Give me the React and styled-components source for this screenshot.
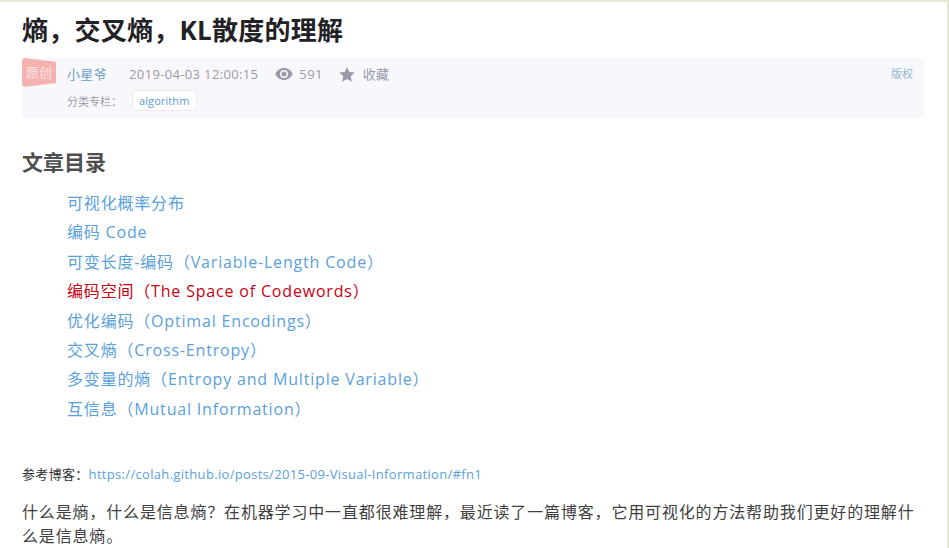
import React from "react";
import styled, { createGlobalStyle } from "styled-components";

const Global = createGlobalStyle`
  html, body { margin: 0; padding: 0; background: #e6e9cf; overflow: hidden; }
  body { font-family: "Open Sans", "Noto Sans CJK SC", sans-serif; }
`;
const Page = styled.div`
  box-sizing: border-box;
  width: 947px;
  height: 546px;
  margin-top: 2px;
  background: #fff;
  padding: 0 23px 0 22px;
  overflow: hidden;
`;
const Title = styled.h1`
  margin: 0;
  padding-top: 13px;
  height: 43px;
  box-sizing: content-box;
  font-size: 26px;
  letter-spacing: 0.25px;
  line-height: 30px;
  font-weight: 700;
  color: #222226;
`;
const Info = styled.div`
  position: relative;
  box-sizing: border-box;
  height: 60px;
  background: #f8f8fc;
  border-radius: 4px;
  padding: 7px 11px 0 45px;
  color: #858585;
  font-size: 13px;
`;
const Badge = styled.span`
  position: absolute;
  left: 0;
  top: 0;
  width: 34px;
  height: 29px;
  background: #f4b2ae;
  color: #fbe6e4;
  font-size: 13px;
  letter-spacing: 0.2px;
  line-height: 29px;
  text-align: center;
  clip-path: polygon(6% 0, 100% 13%, 100% 86%, 6% 100%, 0 92%, 0 6%);
  border-radius: 3px;
`;
const MetaRow = styled.div`
  display: flex;
  align-items: center;
  height: 18px;
  line-height: 18px;
`;
const Author = styled.span`
  font-size: 13px;
  letter-spacing: 0.35px;
  color: #6b9fc9;
  margin-right: 22px;
`;
const Meta = styled.span`
  font-size: 13px;
  letter-spacing: 0.35px;
  color: #9a9aa8;
  margin-right: ${p => p.$gap || 0}px;
`;
const Copy = styled.span`
  margin-left: auto;
  font-size: 11px;
  color: #8eb4d4;
`;
const CategoryRow = styled.div`
  display: flex;
  align-items: center;
  margin-top: 7px;
  height: 21px;
`;
const Label = styled.span`
  font-size: 11px;
  color: #9a9aa8;
  margin-right: 10px;
`;
const Tag = styled.span`
  box-sizing: border-box;
  height: 21px;
  padding: 0 6px;
  background: #fff;
  border: 1px solid #eaeaef;
  border-radius: 3px;
  font-size: 11px;
  letter-spacing: 0.1px;
  line-height: 20px;
  color: #5b9bd8;
`;
const TocHeading = styled.h2`
  margin: 29px 0 0;
  font-size: 21px;
  line-height: 30px;
  font-weight: 700;
  color: #4f4f4f;
`;
const Toc = styled.ul`
  list-style: none;
  margin: 12px 0 0;
  padding: 0 0 0 45px;
`;
const TocItem = styled.li`
  height: 29.4px;
  line-height: 29.4px;
  font-size: 16px;
  letter-spacing: 0.82px;
  color: ${p => (p.$active ? "#c9000f" : "#5a9fdc")};
  white-space: nowrap;
`;
const Ref = styled.p`
  margin: 40px 0 0;
  font-size: 13px;
  letter-spacing: 0.32px;
  line-height: 20px;
  color: #333;
`;
const RefLink = styled.span`
  color: #5a9fdc;
`;
const Body = styled.p`
  margin: 16px 0 0;
  font-size: 16px;
  letter-spacing: 0.84px;
  line-height: 24px;
  color: #3f3f3f;
`;

const toc = [
  "可视化概率分布",
  "编码 Code",
  "可变长度-编码（Variable-Length Code）",
  "编码空间（The Space of Codewords）",
  "优化编码（Optimal Encodings）",
  "交叉熵（Cross-Entropy）",
  "多变量的熵（Entropy and Multiple Variable）",
  "互信息（Mutual Information）",
];

const Eye = () => (
  <svg width="18" height="12" viewBox="0 0 18 12" style={{ marginRight: 6 }}>
    <path fillRule="evenodd" fill="#9a9aa8" d="M9 0C5 0 1.800 2.400 0.300 6 1.800 9.600 5 12 9 12s7.200-2.400 8.700-6C16.200 2.400 13 0 9 0zm0 10a4 4 0 1 1 0-8 4 4 0 0 1 0 8zm0-6.500a2.500 2.500 0 1 0 0 5 2.500 2.500 0 0 0 0-5z" />
  </svg>
);
const Star = () => (
  <svg width="16" height="15" viewBox="0 0 16 15" style={{ marginRight: 8 }}>
    <path fill="#9a9aa8" d="M8 0l2.300 5 5.500.6-4.100 3.700 1.200 5.400L8 12l-4.900 2.700 1.200-5.400L.2 5.600 5.700 5z" />
  </svg>
);

export default function App() {
  return (
    <>
      <Global />
      <Page>
        <Title>熵，交叉熵，KL散度的理解</Title>
        <Info>
          <Badge>原创</Badge>
          <MetaRow>
            <Author>小星爷</Author>
            <Meta $gap={17}>2019-04-03 12:00:15</Meta>
            <Eye />
            <Meta $gap={16}>591</Meta>
            <Star />
            <Meta>收藏</Meta>
            <Copy>版权</Copy>
          </MetaRow>
          <CategoryRow>
            <Label>分类专栏：</Label>
            <Tag>algorithm</Tag>
          </CategoryRow>
        </Info>
        <TocHeading>文章目录</TocHeading>
        <Toc>
          {toc.map((t, i) => (
            <TocItem key={t} $active={i === 3}>{t}</TocItem>
          ))}
        </Toc>
        <Ref>参考博客：<RefLink>https://colah.github.io/posts/2015-09-Visual-Information/#fn1</RefLink></Ref>
        <Body>什么是熵，什么是信息熵？在机器学习中一直都很难理解，最近读了一篇博客，它用可视化的方法帮助我们更好的理解什么是信息熵。</Body>
      </Page>
    </>
  );
}
